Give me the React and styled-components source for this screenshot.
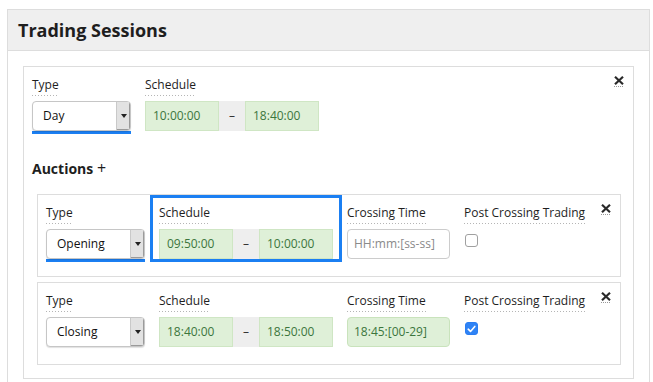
import React from "react";
import styled, { createGlobalStyle } from "styled-components";

const GlobalStyle = createGlobalStyle`
  body {
    margin: 0;
    background: #ffffff;
    font-family: "Open Sans", "Liberation Sans", sans-serif;
    color: #1e1e1e;
  }
`;

const BLUE = "#1b7ff2";

export default function App() {
  return (
    <Page>
      <GlobalStyle />
      <Panel>
        <PanelHeader>
          <Title>Trading Sessions</Title>
        </PanelHeader>
        <PanelBody>
          <SessionCard>
            <CloseButton title="Remove" />
            <FieldRow>
              <Field>
                <Label>Type</Label>
                <Select value="Day" underline />
              </Field>
              <Field>
                <Label>Schedule</Label>
                <Schedule from="10:00:00" to="18:40:00" />
              </Field>
            </FieldRow>

            <SectionTitle>
              Auctions <Plus>+</Plus>
            </SectionTitle>

            <AuctionList>
              <AuctionCard>
                <CloseButton title="Remove" />
                <FieldRow>
                  <Field>
                    <Label>Type</Label>
                    <Select value="Opening" underline />
                  </Field>
                  <Field $active>
                    <Label>Schedule</Label>
                    <Schedule from="09:50:00" to="10:00:00" />
                  </Field>
                  <Field>
                    <Label>Crossing Time</Label>
                    <TimeInput placeholder="HH:mm:[ss-ss]" />
                  </Field>
                  <Field>
                    <Label>Post Crossing Trading</Label>
                    <Checkbox />
                  </Field>
                </FieldRow>
              </AuctionCard>

              <AuctionCard>
                <CloseButton title="Remove" />
                <FieldRow>
                  <Field>
                    <Label>Type</Label>
                    <Select value="Closing" />
                  </Field>
                  <Field>
                    <Label>Schedule</Label>
                    <Schedule from="18:40:00" to="18:50:00" />
                  </Field>
                  <Field>
                    <Label>Crossing Time</Label>
                    <TimeInput value="18:45:[00-29]" />
                  </Field>
                  <Field>
                    <Label>Post Crossing Trading</Label>
                    <Checkbox checked />
                  </Field>
                </FieldRow>
              </AuctionCard>
            </AuctionList>
          </SessionCard>
        </PanelBody>
      </Panel>
    </Page>
  );
}

function Select({ value, underline }) {
  return (
    <SelectWrap $underline={underline}>
      <SelectBox>
        <SelectValue>{value}</SelectValue>
        <SelectArrow>
          <svg width="6" height="4" viewBox="0 0 6 4">
            <path d="M0 0 L6 0 L3 4 Z" fill="#222" />
          </svg>
        </SelectArrow>
      </SelectBox>
    </SelectWrap>
  );
}

function Schedule({ from, to }) {
  return (
    <ScheduleGroup>
      <TimeCell>{from}</TimeCell>
      <Dash>–</Dash>
      <TimeCell>{to}</TimeCell>
    </ScheduleGroup>
  );
}

function TimeInput({ value, placeholder }) {
  return <TimeBox $filled={!!value}>{value || placeholder}</TimeBox>;
}

function Checkbox({ checked }) {
  return (
    <CheckBox $checked={checked}>
      {checked && (
        <svg width="9" height="8" viewBox="0 0 9 8">
          <path
            d="M1.2 4.2 L3.5 6.4 L7.8 1.4"
            fill="none"
            stroke="#fff"
            strokeWidth="1.6"
            strokeLinecap="round"
            strokeLinejoin="round"
          />
        </svg>
      )}
    </CheckBox>
  );
}

function CloseButton({ title }) {
  return (
    <Close title={title}>
      <svg width="10" height="9" viewBox="0 0 10 9">
        <path
          d="M1 0.8 L9 8.2 M9 0.8 L1 8.2"
          stroke="#2a2a2a"
          strokeWidth="2.2"
          fill="none"
        />
      </svg>
    </Close>
  );
}

const Page = styled.div`
  padding: 9px 3px 0 7px;
`;

const Panel = styled.div`
  border: 1px solid #dddddd;
  border-bottom: none;
  height: 380px;
  box-sizing: border-box;
`;

const PanelHeader = styled.div`
  height: 40px;
  background: #efefef;
  border-bottom: 1px solid #dddddd;
  display: flex;
  align-items: center;
  padding: 0 10px;
`;

const Title = styled.h2`
  margin: 0;
  font-size: 18px;
  font-weight: 700;
  line-height: 22px;
  color: #1e1e1e;
`;

const PanelBody = styled.div`
  padding: 15px 15px 0 15px;
`;

const SessionCard = styled.div`
  position: relative;
  border: 1px solid #dddddd;
  padding: 0 0 13px 0;
`;

const AuctionCard = styled.div`
  position: relative;
  border: 1px solid #dddddd;
  padding: 0 0 14px 0;
`;

const AuctionList = styled.div`
  display: flex;
  flex-direction: column;
  gap: 5px;
  margin: 0 12px 0 13px;
`;

const FieldRow = styled.div`
  display: flex;
  align-items: stretch;
  margin-left: -1px;
`;

const Field = styled.div`
  display: flex;
  flex-direction: column;
  align-items: flex-start;
  padding: 10px 9px 0;
  box-shadow: ${(p) => (p.$active ? `inset 0 0 0 3px ${BLUE}` : "none")};
  & + & {
    margin-left: -4px;
  }
`;

const Label = styled.span`
  font-size: 12px;
  line-height: 16px;
  color: #1e1e1e;
  padding-bottom: 3px;
  margin-bottom: 5px;
  background: linear-gradient(to right, #b5b5b5 50%, transparent 50%) left bottom / 3px 1px repeat-x;
`;

const SelectWrap = styled.div`
  border-bottom: 3px solid ${(p) => (p.$underline ? BLUE : "transparent")};
`;

const SelectBox = styled.div`
  width: 99px;
  height: 30px;
  box-sizing: border-box;
  display: flex;
  align-items: stretch;
  border: 1px solid #c6c6c6;
  border-radius: 4px;
  background: #ffffff;
  box-shadow: 0 1px 1px rgba(0, 0, 0, 0.12);
  overflow: hidden;
`;

const SelectValue = styled.span`
  flex: 1;
  font-size: 12px;
  line-height: 28px;
  padding-left: 10px;
  color: #111;
`;

const SelectArrow = styled.span`
  width: 13px;
  display: flex;
  align-items: center;
  justify-content: center;
  background: #e2e2e2;
  border-left: 1px solid #c9c9c9;
  box-shadow: inset -1px -1px 0 #9a9a9a;
`;

const ScheduleGroup = styled.div`
  display: flex;
  height: 30px;
  width: 174px;
  box-sizing: border-box;
`;

const TimeCell = styled.div`
  width: 74px;
  box-sizing: border-box;
  background: #dff0d8;
  border: 1px solid #cfe6c4;
  color: #3c763d;
  font-size: 12px;
  line-height: 28px;
  padding-left: 7px;
`;

const Dash = styled.div`
  width: 26px;
  background: #eeeeee;
  text-align: center;
  font-size: 12px;
  line-height: 30px;
  color: #333;
`;

const TimeBox = styled.div`
  width: 103px;
  height: 30px;
  box-sizing: border-box;
  border: 1px solid ${(p) => (p.$filled ? "#c9e3bc" : "#cccccc")};
  border-radius: 4px;
  background: ${(p) => (p.$filled ? "#dff0d8" : "#ffffff")};
  color: ${(p) => (p.$filled ? "#3c763d" : "#8a8a8a")};
  font-size: 12px;
  line-height: 28px;
  padding-left: 6px;
`;

const CheckBox = styled.span`
  margin: 5px 0 0 1px;
  width: 13px;
  height: 13px;
  box-sizing: border-box;
  border-radius: 3px;
  display: flex;
  align-items: center;
  justify-content: center;
  border: 1px solid ${(p) => (p.$checked ? "#2a7df2" : "#a0a0a0")};
  background: ${(p) => (p.$checked ? "#2f83f5" : "#ffffff")};
`;

const SectionTitle = styled.h3`
  margin: 25px 0 16px 8px;
  font-size: 14px;
  font-weight: 700;
  line-height: 18px;
  color: #1e1e1e;
`;

const Plus = styled.span`
  font-weight: 400;
  font-size: 16px;
`;

const Close = styled.span`
  position: absolute;
  top: 9px;
  right: 9px;
  display: flex;
  padding-bottom: 2px;
  background: linear-gradient(to right, #9a9a9a 50%, transparent 50%) left bottom / 2px 1px repeat-x;
  cursor: pointer;
`;
